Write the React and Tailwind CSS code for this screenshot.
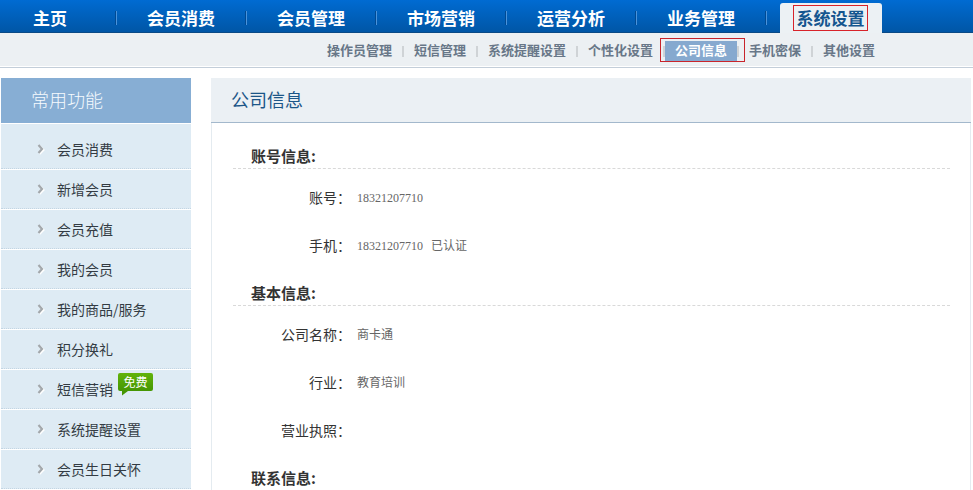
const mainNav = ['会员消费', '会员管理', '市场营销', '运营分析', '业务管理']

const subNav = [
  { name: '操作员管理' },
  { name: '短信管理' },
  { name: '系统提醒设置' },
  { name: '个性化设置' },
  { name: '公司信息', active: true },
  { name: '手机密保' },
  { name: '其他设置' },
]

const sideLinks = [
  { name: '会员消费' },
  { name: '新增会员' },
  { name: '会员充值' },
  { name: '我的会员' },
  { name: '我的商品/服务' },
  { name: '积分换礼' },
  { name: '短信营销', badge: '免费' },
  { name: '系统提醒设置' },
  { name: '会员生日关怀' },
]

const sections = [
  {
    title: '账号信息:',
    fields: [
      { label: '账号：', value: '18321207710' },
      { label: '手机：', value: '18321207710', note: '已认证' },
    ],
  },
  {
    title: '基本信息:',
    fields: [
      { label: '公司名称：', value: '商卡通' },
      { label: '行业：', value: '教育培训' },
      { label: '营业执照：', value: '' },
    ],
  },
  { title: '联系信息:', fields: [] },
]

function NavDivider() {
  return <span className="h-3.5 w-0.5 shrink-0 border-r border-[#4a93db] bg-[#004a93]" />
}

function MainNav() {
  return (
    <nav className="flex h-[33px] items-center border-b border-[#0a4a86] bg-linear-to-b from-[#006bd2] to-[#0056a6] pt-1 text-[17px] font-bold text-white">
      <a href="#" className="w-[115px] shrink-0 pl-[33px]">
        主页
      </a>
      <NavDivider />
      {mainNav.map((name) => (
        <div key={name} className="flex w-[130px] shrink-0 items-center">
          <a href="#" className="flex-1 text-center">
            {name}
          </a>
          <NavDivider />
        </div>
      ))}
      <a
        href="#"
        className="-mb-px ml-[13px] flex h-[30px] w-[102px] shrink-0 justify-center self-end rounded-t-[3px] bg-[#ecf1f4] pt-0.5 pr-px text-[#15568f]"
      >
        <span className="flex h-[26px] w-[75px] items-center justify-center border border-[#d8232a]">
          系统设置
        </span>
      </a>
    </nav>
  )
}

function SubNav() {
  return (
    <nav className="border-b border-[#c3ced9] bg-white pb-px">
      <ul className="flex h-[33px] items-center bg-[#ecf0f3] pl-[317px] text-[13px] font-bold text-[#687788]">
        {subNav.map((link, index) => (
          <li key={link.name} className="flex shrink-0 items-center">
            {index > 0 && <span className="mt-1 h-[11px] w-0.5 bg-[#cfd3d6]" />}
            {link.active ? (
              <a href="#" className="relative mt-0.5 flex h-5 items-center bg-[#86a9cf] px-2.5 pb-0.5 text-white">
                {link.name}
                <span className="absolute -top-[3px] -right-2 -bottom-px -left-[5px] border border-[#c8242b]" />
              </a>
            ) : (
              <a href="#" className="px-2.5">
                {link.name}
              </a>
            )}
          </li>
        ))}
      </ul>
    </nav>
  )
}

function Chevron() {
  return (
    <svg width="8" height="12" viewBox="0 0 8 12" fill="none" className="shrink-0">
      <path d="M2.5 3 6.5 7 2.5 11" stroke="#ffffff" strokeWidth="2" />
      <path d="M1.5 2 5 6 1.5 10" stroke="#a3a8ac" strokeWidth="2.2" />
    </svg>
  )
}

function Badge({ children }) {
  return (
    <span className="relative -mt-3.5 ml-[5px] flex h-[18px] w-[35px] items-center justify-center rounded-xs bg-linear-to-b from-[#62b30b] to-[#459603] text-xs text-white">
      {children}
      <svg width="6" height="5" viewBox="0 0 6 5" className="absolute top-full left-1">
        <path d="M0 0H6L0 4.5Z" fill="#459603" />
      </svg>
    </span>
  )
}

function Sidebar() {
  return (
    <aside className="w-[190px] shrink-0">
      <h2 className="flex h-[45px] items-center bg-[#87aed4] pb-[3px] pl-[30px] text-lg font-light text-[#f6fafe]">
        常用功能
      </h2>
      <ul className="mt-px bg-[#deebf4] pt-1.5 text-sm text-[#333b43]">
        {sideLinks.map((link) => (
          <li key={link.name} className="border-b border-white">
            <a href="#" className="flex h-[39px] items-center border-b border-dotted border-[#c3d5e3] pl-9">
              <Chevron />
              <span className="ml-3">{link.name}</span>
              {link.badge && <Badge>{link.badge}</Badge>}
            </a>
          </li>
        ))}
      </ul>
    </aside>
  )
}

function Section({ title, fields }) {
  return (
    <section className="mb-[11px]">
      <h3 className="flex h-[25px] items-center border-b border-dashed border-[#d9d9d9] pl-[18px] text-[15px] font-bold text-[#333]">
        {title}
      </h3>
      <dl className="pt-[5px]">
        {fields.map((field) => (
          <div key={field.label} className="flex h-12 items-center">
            <dt className="w-[118px] pb-0.5 text-right text-sm text-[#333]">{field.label}</dt>
            <dd className="ml-1.5 flex gap-2 font-['Liberation_Serif','Noto_Sans_CJK_SC',serif] text-xs text-[#666]">
              <span>{field.value}</span>
              {field.note && <span>{field.note}</span>}
            </dd>
          </div>
        ))}
      </dl>
    </section>
  )
}

function App() {
  return (
    <div className="h-screen overflow-hidden bg-white font-['Noto_Sans_CJK_SC',sans-serif]">
      <MainNav />
      <SubNav />
      <div className="flex gap-5 pt-2.5 pr-0.5 pl-px">
        <Sidebar />
        <main className="min-w-0 flex-1">
          <h1 className="flex h-[45px] items-center border-b border-[#a3b8cc] bg-[#ebf0f4] pb-0.5 pl-5 text-lg text-[#1c5688]">
            公司信息
          </h1>
          <div className="border-x border-[#e4ebf0] pt-[21px] pr-5 pl-[21px]">
            {sections.map((section) => (
              <Section key={section.title} title={section.title} fields={section.fields} />
            ))}
          </div>
        </main>
      </div>
    </div>
  )
}

export default App
